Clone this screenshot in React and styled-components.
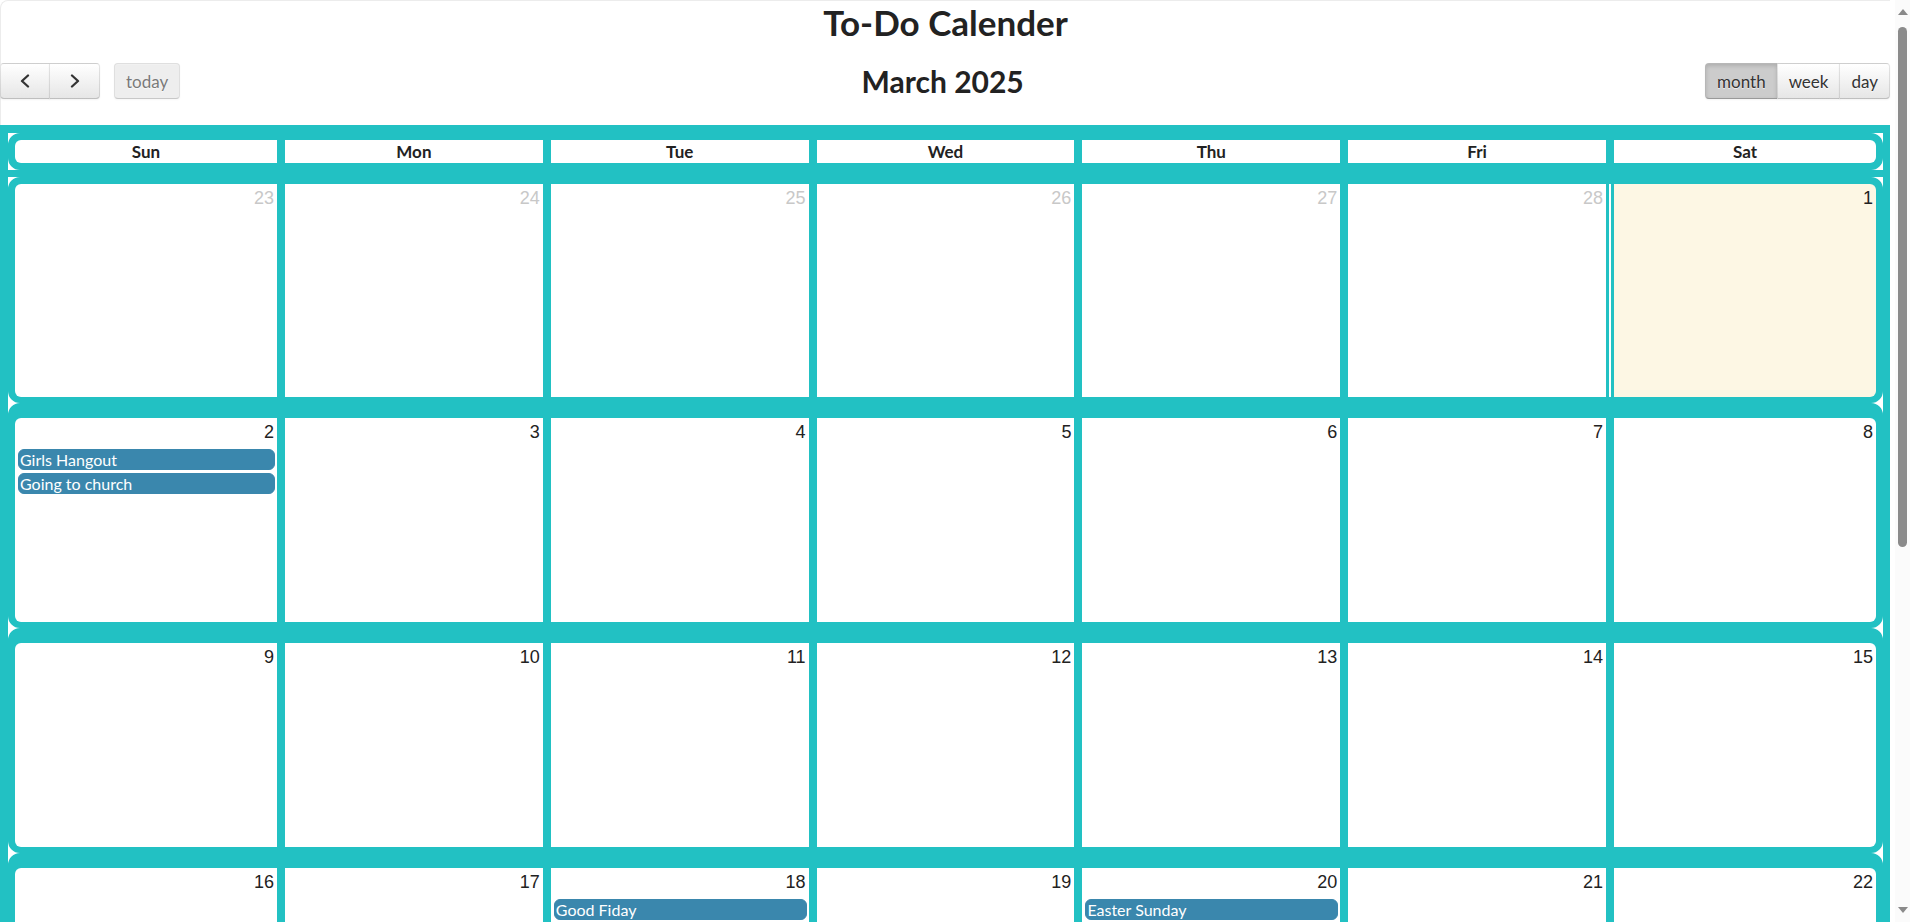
import React from "react";
import styled, { createGlobalStyle } from "styled-components";

const TEAL = "#22c1c3";

const GlobalStyle = createGlobalStyle`
  html, body {
    margin: 0;
    padding: 0;
    background: #fff;
  }
  body {
    font-family: Lato, "Open Sans", sans-serif;
    font-size: 17px;
    color: #222;
  }
`;

const Page = styled.div`
  width: 1890px;
  box-sizing: border-box;
  border-top: 1px solid #ececec;
  border-left: 1px solid #ececec;
  border-radius: 8px 0 0 0;
`;

/* stand-in for the browser's page scrollbar, drawn over the right edge */
const ScrollRail = styled.div`
  position: fixed;
  top: 0;
  right: 0;
  width: 15px;
  height: 100vh;
  background: #fbfbfb;
  display: flex;
  flex-direction: column;
  align-items: center;
`;

const ScrollArrow = styled.div`
  width: 0;
  height: 0;
  margin: ${(p) => (p.$down ? "auto 0 9px" : "9px 0 0")};
  border-left: 5px solid transparent;
  border-right: 5px solid transparent;
  ${(p) => (p.$down ? "border-top: 6px solid #8a8a8a;" : "border-bottom: 6px solid #8a8a8a;")}
`;

const ScrollThumb = styled.div`
  width: 9px;
  height: 520px;
  margin-top: 12px;
  border-radius: 5px;
  background: #8b8b8b;
`;

const Title = styled.h1`
  margin: 1px 0 20px;
  text-align: center;
  font-size: 35px;
  font-weight: 700;
  line-height: 41px;
  color: #222;
`;

const Toolbar = styled.div`
  display: flex;
  align-items: center;
  justify-content: space-between;
  height: 36px;
  margin: 0 0 26px -1px;
`;

const ToolGroup = styled.div`
  display: flex;
  align-items: center;
  gap: 14px;
`;

const ButtonGroup = styled.div`
  display: flex;
`;

const Button = styled.button`
  height: 36px;
  padding: 0 11px;
  width: ${(p) => (p.$w ? `${p.$w}px` : "auto")};
  display: flex;
  align-items: center;
  justify-content: center;
  font-family: Lato, sans-serif;
  font-size: 17px;
  color: #333;
  border: 1px solid;
  border-color: rgba(0, 0, 0, 0.1) rgba(0, 0, 0, 0.1) rgba(0, 0, 0, 0.25);
  margin-left: -1px;
  border-radius: 0;
  background-image: ${(p) =>
    p.$active || p.disabled ? "none" : "linear-gradient(to bottom, #fff, #e6e6e6)"};
  background-color: ${(p) => (p.$active ? "#cccccc" : p.disabled ? "#e6e6e6" : "#f5f5f5")};
  box-shadow: ${(p) =>
    p.$active
      ? "inset 0 2px 4px rgba(0,0,0,.15), 0 1px 2px rgba(0,0,0,.05)"
      : "inset 0 1px 0 rgba(255,255,255,.2), 0 1px 2px rgba(0,0,0,.05)"};
  text-shadow: 0 1px 1px rgba(255, 255, 255, 0.75);
  opacity: ${(p) => (p.disabled ? 0.65 : 1)};
  cursor: pointer;

  &:first-child {
    margin-left: 0;
    border-top-left-radius: 4px;
    border-bottom-left-radius: 4px;
  }
  &:last-child {
    border-top-right-radius: 4px;
    border-bottom-right-radius: 4px;
  }
`;

const MonthTitle = styled.h2`
  margin: 0;
  font-size: 30px;
  font-weight: 700;
  line-height: 36px;
  color: #222;
`;

const Board = styled.div`
  background: ${TEAL};
  padding: 8px 7px 8px 8px;
  margin-left: -1px;
`;

const Frame = styled.div`
  background: #fff;
  margin-bottom: ${(p) => (p.$gap ? `${p.$gap}px` : "0")};
`;

const COLS = "262px repeat(5, 1fr) 262px";

const HeadBox = styled.div`
  display: grid;
  grid-template-columns: ${COLS};
  column-gap: 8px;
  background: ${TEAL};
  border: 7px solid ${TEAL};
  border-radius: 12px;
`;

const HeadCell = styled.div`
  background: #fff;
  height: 23px;
  line-height: 23px;
  text-align: center;
  font-weight: 700;
  font-size: 17px;
  color: #222;
  border-radius: ${(p) => p.$r || "0"};
`;

const WeekBox = styled.div`
  display: grid;
  grid-template-columns: ${COLS};
  column-gap: 8px;
  background: ${TEAL};
  border: 7px solid ${TEAL};
  border-top-width: ${(p) => (p.$first ? 7 : 15)}px;
  border-bottom-width: 6px;
  border-radius: 12px;
`;

const DayCell = styled.div`
  background: ${(p) => (p.$today ? "#fdf7e4" : "#fff")};
  height: ${(p) => p.$h}px;
  box-shadow: ${(p) => (p.$today ? `-3px 0 0 ${TEAL}, -5px 0 0 #fff` : "none")};
  border-radius: ${(p) => p.$r || "0"};
  display: flex;
  flex-direction: column;
`;

const DayNum = styled.div`
  text-align: right;
  padding: 4px 3px 0;
  font-family: "Liberation Sans", Arial, sans-serif;
  font-size: 18px;
  line-height: 21px;
  color: ${(p) => (p.$other ? "#c8c8c8" : "#222")};
`;

const Events = styled.div`
  display: flex;
  flex-direction: column;
  gap: 3px;
  margin: 6px 2px 0 3px;
`;

const EventBar = styled.div`
  height: 21px;
  box-sizing: border-box;
  background: #3a87ad;
  border: 1px solid #3a87ad;
  border-radius: 6px;
  padding: 0 1px;
  color: #fff;
  font-size: 16px;
  line-height: 19px;
  white-space: nowrap;
  overflow: hidden;
`;

const Chevron = ({ dir }) => (
  <svg width="12" height="14" viewBox="0 0 12 14">
    <polyline
      points={dir === "left" ? "9,1.5 3,7 9,12.5" : "3,1.5 9,7 3,12.5"}
      fill="none"
      stroke="#333"
      strokeWidth="2.3"
      strokeLinecap="round"
      strokeLinejoin="round"
    />
  </svg>
);

const DAYS = ["Sun", "Mon", "Tue", "Wed", "Thu", "Fri", "Sat"];

const EVENTS = {
  "2025-3-2": ["Girls Hangout", "Going to church"],
  "2025-3-18": ["Good Fiday"],
  "2025-3-20": ["Easter Sunday"],
};

function buildWeeks() {
  const start = new Date(2025, 1, 23);
  const weeks = [];
  for (let w = 0; w < 6; w++) {
    const week = [];
    for (let d = 0; d < 7; d++) {
      const date = new Date(start);
      date.setDate(start.getDate() + w * 7 + d);
      week.push(date);
    }
    weeks.push(week);
  }
  return weeks;
}

const cornerRadius = (i, last) =>
  i === 0 ? "6px 0 0 6px" : i === last ? "0 6px 6px 0" : "0";

export default function App() {
  const weeks = buildWeeks();

  return (
    <>
      <GlobalStyle />
      <Page>
        <Title>To-Do Calender</Title>
        <Toolbar>
          <ToolGroup>
            <ButtonGroup>
              <Button $w={50} aria-label="prev">
                <Chevron dir="left" />
              </Button>
              <Button $w={51} aria-label="next">
                <Chevron dir="right" />
              </Button>
            </ButtonGroup>
            <ButtonGroup>
              <Button disabled>today</Button>
            </ButtonGroup>
          </ToolGroup>
          <MonthTitle>March 2025</MonthTitle>
          <ButtonGroup>
            <Button $active>month</Button>
            <Button>week</Button>
            <Button>day</Button>
          </ButtonGroup>
        </Toolbar>

        <Board>
          <Frame $gap={7}>
            <HeadBox>
              {DAYS.map((d, i) => (
                <HeadCell key={d} $r={cornerRadius(i, 6)}>
                  {d}
                </HeadCell>
              ))}
            </HeadBox>
          </Frame>
          {weeks.map((week, w) => (
            <Frame key={w}>
              <WeekBox $first={w === 0}>
                {week.map((date, i) => {
                  const key = `${date.getFullYear()}-${date.getMonth() + 1}-${date.getDate()}`;
                  const events = EVENTS[key] || [];
                  const other = date.getMonth() !== 2;
                  const today = key === "2025-3-1";
                  return (
                    <DayCell
                      key={key}
                      $h={w === 0 ? 213 : 204}
                      $today={today}
                      $r={cornerRadius(i, 6)}
                    >
                      <DayNum $other={other}>{date.getDate()}</DayNum>
                      {events.length > 0 && (
                        <Events>
                          {events.map((e) => (
                            <EventBar key={e}>{e}</EventBar>
                          ))}
                        </Events>
                      )}
                    </DayCell>
                  );
                })}
              </WeekBox>
            </Frame>
          ))}
        </Board>
      </Page>
      <ScrollRail aria-hidden="true">
        <ScrollArrow />
        <ScrollThumb />
        <ScrollArrow $down />
      </ScrollRail>
    </>
  );
}
